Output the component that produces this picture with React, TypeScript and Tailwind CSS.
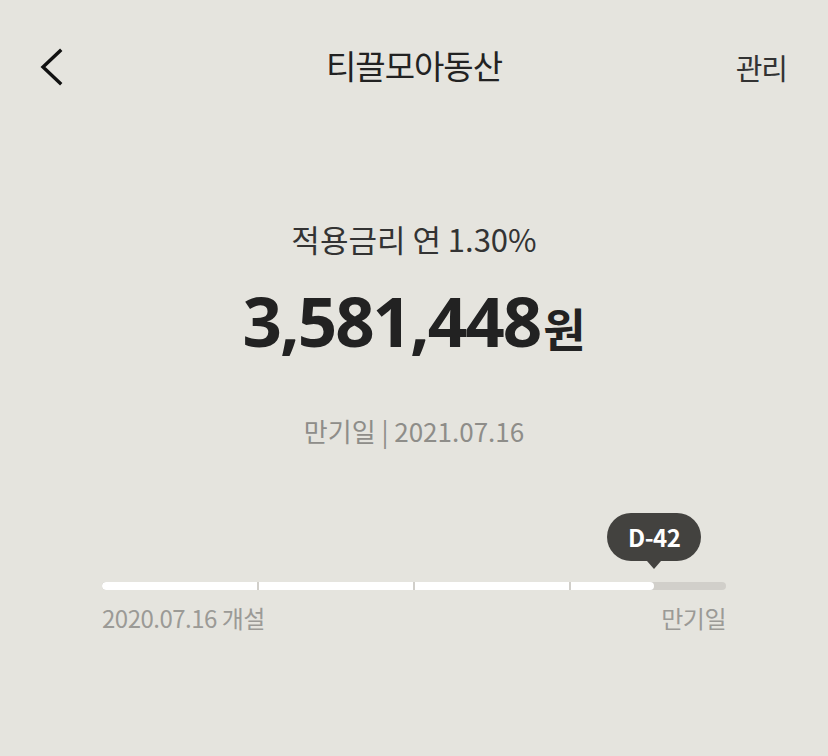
import React from "react";

const font = { fontFamily: '"Noto Sans CJK KR", "Noto Sans", sans-serif' };

function BackIcon() {
  return (
    <svg width="24" height="38" viewBox="0 0 24 38" fill="none">
      <path d="M21 3 L4 19 L21 35" stroke="#111" strokeWidth="3.4" strokeLinecap="square" strokeLinejoin="miter" />
    </svg>
  );
}

function Progress({ percent, label }: { percent: number; label: string }) {
  return (
    <div className="mx-auto w-[624px]">
      <div className="relative h-[8px] w-full">
        <div className="absolute bottom-[21px] flex -translate-x-1/2 flex-col items-center" style={{ left: `${percent}%` }}>
          <div className="flex h-[48px] w-[94px] items-center justify-center rounded-full bg-[#43423f] text-[24px] font-bold tracking-[-0.5px] text-white">{label}</div>
          <div className="h-0 w-0 border-x-[7px] border-t-[8px] border-x-transparent border-t-[#43423f]" />
        </div>
        <div className="relative h-full w-full overflow-hidden rounded-full bg-[#d1cfca]">
          <div className="h-full rounded-full bg-white" style={{ width: `${percent}%` }} />
          <div className="absolute left-1/4 top-0 h-full w-[2px] -translate-x-1/2 bg-[#d1cfca]" />
          <div className="absolute left-1/2 top-0 h-full w-[2px] -translate-x-1/2 bg-[#d1cfca]" />
          <div className="absolute left-3/4 top-0 h-full w-[2px] -translate-x-1/2 bg-[#d1cfca]" />
        </div>
      </div>
      <div className="mt-[13px] flex justify-between text-[24px] leading-[30px] tracking-[-0.5px] text-[#9b9a96]">
        <span>2020.07.16 개설</span>
        <span>만기일</span>
      </div>
    </div>
  );
}

export default function App() {
  return (
    <div className="h-[756px] w-[828px] overflow-hidden bg-[#e5e4de]" style={font}>
      <header className="relative flex h-[132px] items-center justify-center">
        <button type="button" className="absolute left-[39px] top-[48px]">
          <BackIcon />
        </button>
        <h1 className="text-[33px] font-normal tracking-[-1px] text-[#222]">티끌모아동산</h1>
        <span className="absolute right-[41px] top-[46px] text-[29px] tracking-[-1px] text-[#333]">관리</span>
      </header>
      <main className="flex flex-col items-center">
        <div className="mt-[86px] text-[31px] leading-[42px] tracking-[0px] text-[#333]">적용금리 연 1.30%</div>
        <div className="mt-[20px] flex items-baseline font-bold text-[#222]">
          <span className="text-[69px] leading-[80px] tracking-[-2px]" style={{ fontFamily: '"Noto Sans", sans-serif' }}>3,581,448</span>
          <span className="ml-[3px] text-[46px] leading-[80px]">원</span>
        </div>
        <div className="mt-[46px] text-[26px] leading-[36px] tracking-[0px] text-[#8e8d89]">만기일 | 2021.07.16</div>
      </main>
      <div className="mt-[133px]">
        <Progress percent={88.5} label="D-42" />
      </div>
    </div>
  );
}
